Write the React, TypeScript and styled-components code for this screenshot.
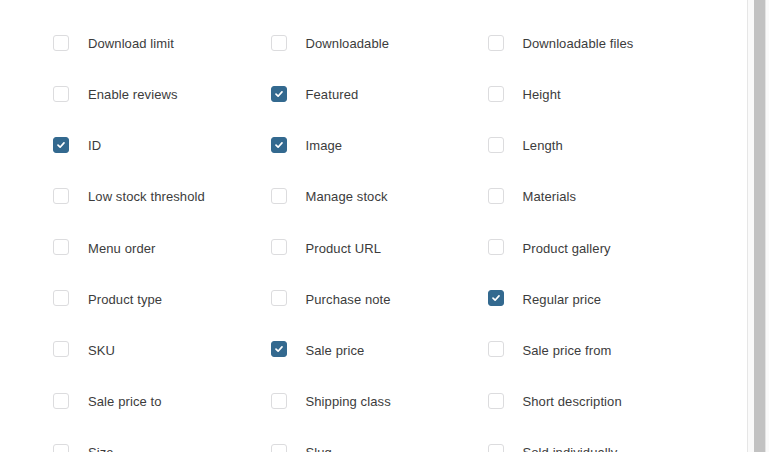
import React from "react";
import styled, { createGlobalStyle } from "styled-components";

const Global = createGlobalStyle`
  html, body { margin: 0; padding: 0; background: #fff; }
  body { width: 769px; height: 452px; overflow: hidden; }
`;

const Frame = styled.div`
  display: flex;
  width: 769px;
  height: 452px;
  overflow: hidden;
  background: #fff;
`;

const Content = styled.div`
  flex: 1;
  overflow: hidden;
  padding: 18px 0 0 53px;
`;

const Grid = styled.div`
  display: grid;
  grid-template-columns: 217.5px 217px 1fr;
  grid-auto-rows: 51.15px;
`;

const Option = styled.label`
  display: flex;
  align-items: center;
  gap: 19px;
  font-family: "Helvetica Neue", "Liberation Sans", Arial, sans-serif;
  font-size: 13px;
  letter-spacing: 0.1px;
  color: #3c3c3c;
`;

const Box = styled.span<{ $checked: boolean }>`
  width: 16px;
  height: 16px;
  box-sizing: border-box;
  border-radius: 3px;
  border: 1px solid ${(p) => (p.$checked ? "#33698f" : "#dcdcde")};
  background: ${(p) => (p.$checked ? "#33698f" : "#fff")};
  display: flex;
  align-items: center;
  justify-content: center;
  flex: none;
  margin-top: -2px;
`;

const Track = styled.div`
  width: 22px;
  flex: none;
  box-sizing: border-box;
  border-left: 1px solid #e6e6e6;
  background: #fafafa;
  display: flex;
  padding-left: 6px;
  padding-right: 3px;
`;

const Thumb = styled.div`
  width: 11px;
  background: #c2c2c2;
  border-right: 1px solid #e4e4e4;
`;

const items: [string, boolean][] = [
  ["Download limit", false],
  ["Downloadable", false],
  ["Downloadable files", false],
  ["Enable reviews", false],
  ["Featured", true],
  ["Height", false],
  ["ID", true],
  ["Image", true],
  ["Length", false],
  ["Low stock threshold", false],
  ["Manage stock", false],
  ["Materials", false],
  ["Menu order", false],
  ["Product URL", false],
  ["Product gallery", false],
  ["Product type", false],
  ["Purchase note", false],
  ["Regular price", true],
  ["SKU", false],
  ["Sale price", true],
  ["Sale price from", false],
  ["Sale price to", false],
  ["Shipping class", false],
  ["Short description", false],
  ["Size", false],
  ["Slug", false],
  ["Sold individually", false],
];

const Check = () => (
  <svg width="10" height="10" viewBox="0 0 10 10">
    <path d="M2 5.2 L4.1 7.2 L8 2.9" stroke="#fff" strokeWidth="1.7" fill="none" strokeLinecap="round" strokeLinejoin="round" />
  </svg>
);

export default function App() {
  return (
    <>
      <Global />
      <Frame>
        <Content>
          <Grid>
            {items.map(([label, checked]) => (
              <Option key={label}>
                <Box $checked={checked}>{checked && <Check />}</Box>
                {label}
              </Option>
            ))}
          </Grid>
        </Content>
        <Track>
          <Thumb />
        </Track>
      </Frame>
    </>
  );
}
